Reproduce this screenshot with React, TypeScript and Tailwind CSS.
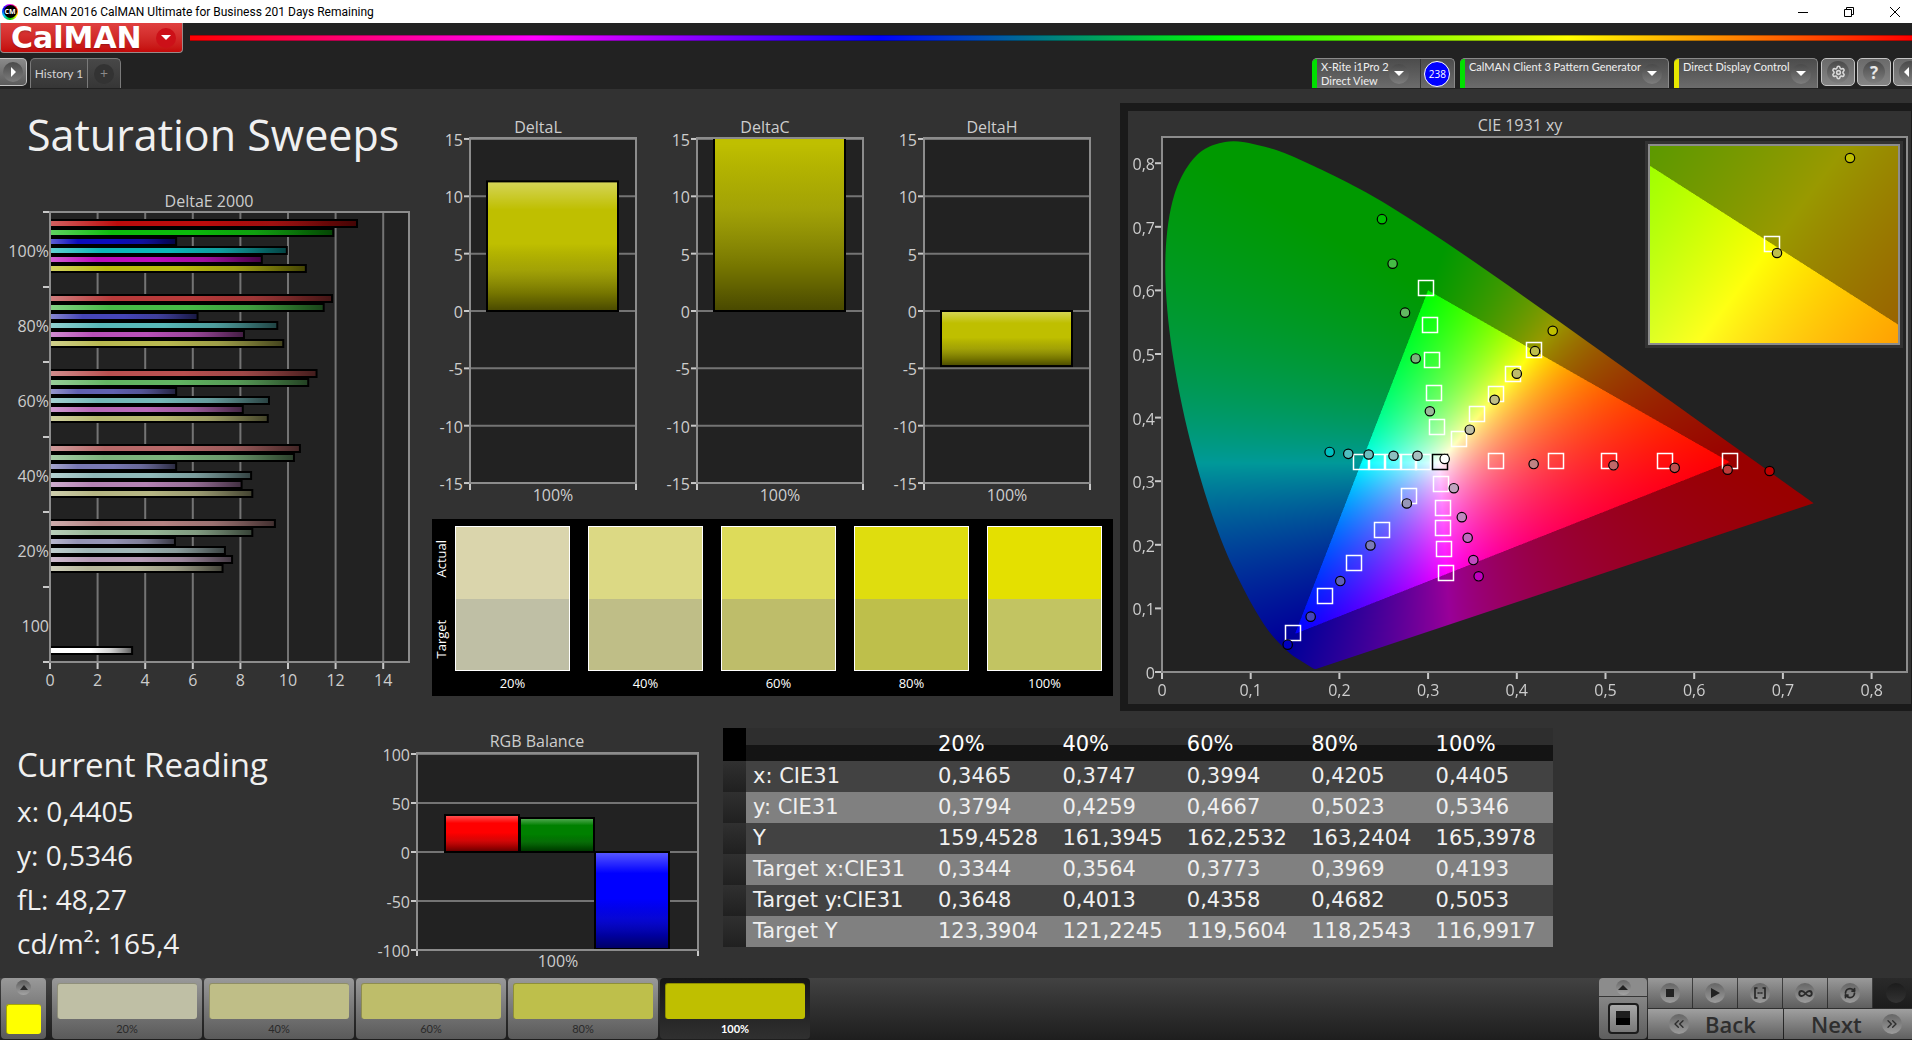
import { useLayoutEffect, useRef } from 'react';
import type { ReactNode } from 'react';
import { Settings, Infinity as InfinityIcon, RefreshCw, ChevronsLeft, ChevronsRight } from 'lucide-react';

type Point = [number, number];

const LEVELS = ['20%', '40%', '60%', '80%', '100%'];

const SWATCHES = [
  { level: '20%', actual: 'bg-[#dad5ac]', target: 'bg-[#bfbfa5]' },
  { level: '40%', actual: 'bg-[#dcd984]', target: 'bg-[#bfbe87]' },
  { level: '60%', actual: 'bg-[#dddb5a]', target: 'bg-[#bebd6a]' },
  { level: '80%', actual: 'bg-[#dfdd0e]', target: 'bg-[#bebf4b]' },
  { level: '100%', actual: 'bg-[#e4e000]', target: 'bg-[#c2c462]' },
];

const TILES = [
  { level: '20%', color: 'bg-[#bfbfa5]' },
  { level: '40%', color: 'bg-[#bfbe87]' },
  { level: '60%', color: 'bg-[#bebd6a]' },
  { level: '80%', color: 'bg-[#bebf4b]' },
  { level: '100%', color: 'bg-[#bfbf00]' },
];

const TABLE_ROWS = [
  { label: 'x: CIE31', values: ['0,3465', '0,3747', '0,3994', '0,4205', '0,4405'] },
  { label: 'y: CIE31', values: ['0,3794', '0,4259', '0,4667', '0,5023', '0,5346'] },
  { label: 'Y', values: ['159,4528', '161,3945', '162,2532', '163,2404', '165,3978'] },
  { label: 'Target x:CIE31', values: ['0,3344', '0,3564', '0,3773', '0,3969', '0,4193'] },
  { label: 'Target y:CIE31', values: ['0,3648', '0,4013', '0,4358', '0,4682', '0,5053'] },
  { label: 'Target Y', values: ['123,3904', '121,2245', '119,5604', '118,2543', '116,9917'] },
];

const DELTA_E = [
  { label: '100%', values: [12.9, 11.9, 5.3, 9.95, 8.9, 10.75], colors: ['#bb0c0c', '#0cbb0c', '#0c0cbb', '#0cb8b8', '#bb0cbb', '#bbbb0c'] },
  { label: '80%', values: [11.85, 11.5, 6.2, 9.55, 8.15, 9.8], colors: ['#b83a3a', '#46ba46', '#4646b8', '#58b8b8', '#b850b8', '#b8b850'] },
  { label: '60%', values: [11.2, 10.85, 5.3, 9.2, 8.1, 9.15], colors: ['#b95050', '#62b562', '#6060b0', '#74b8b8', '#b868b8', '#b8b870'] },
  { label: '40%', values: [10.5, 10.25, 5.3, 8.45, 8.05, 8.5], colors: ['#b76868', '#7bb37b', '#7878b4', '#8fb8b8', '#b482b4', '#b5b583'] },
  { label: '20%', values: [9.45, 8.5, 5.25, 7.35, 7.65, 7.25], colors: ['#b48282', '#96b696', '#9494b4', '#a0b6b6', '#b69bb6', '#b7b79b'] },
];

// CIE 1931 spectral locus, 380nm to 700nm
const LOCUS: Point[] = [
  [0.1741, 0.005], [0.1714, 0.0051], [0.1644, 0.0109], [0.1566, 0.0177], [0.144, 0.0297], [0.1241, 0.0578],
  [0.1096, 0.0868], [0.0913, 0.1327], [0.0687, 0.2007], [0.0454, 0.295], [0.0235, 0.4127], [0.0082, 0.5384],
  [0.0039, 0.6548], [0.0139, 0.7502], [0.0389, 0.812], [0.0743, 0.8338], [0.1142, 0.8262], [0.1547, 0.8059],
  [0.2296, 0.7543], [0.3016, 0.6923], [0.3731, 0.6245], [0.4441, 0.5547], [0.5125, 0.4866], [0.5752, 0.4242],
  [0.627, 0.3725], [0.6658, 0.334], [0.6915, 0.3083], [0.719, 0.2809], [0.7347, 0.2653],
];

const TARGETS: Point[] = [
  [0.298, 0.603], [0.3025, 0.545], [0.304, 0.491], [0.307, 0.439], [0.31, 0.386],
  [0.419, 0.507], [0.396, 0.469], [0.3765, 0.437], [0.3555, 0.405], [0.3345, 0.367],
  [0.224, 0.33], [0.242, 0.33], [0.26, 0.33], [0.278, 0.33], [0.294, 0.33],
  [0.315, 0.295], [0.3164, 0.2576], [0.3164, 0.227], [0.3183, 0.193], [0.32, 0.155],
  [0.279, 0.276], [0.248, 0.223], [0.216, 0.171], [0.184, 0.12], [0.148, 0.062],
  [0.3765, 0.332], [0.444, 0.332], [0.5036, 0.332], [0.567, 0.332], [0.64, 0.332],
];

const READINGS: { points: Point[]; colors: string[] }[] = [
  {
    points: [[0.248, 0.712], [0.26, 0.642], [0.274, 0.565], [0.286, 0.493], [0.302, 0.41]],
    colors: ['#00bf00', '#45bc45', '#62b862', '#7bb57b', '#99b799'],
  },
  {
    points: [[0.4405, 0.5365], [0.4205, 0.5045], [0.4, 0.469], [0.375, 0.428], [0.347, 0.381]],
    colors: ['#bfbf00', '#bebf4b', '#bebd6a', '#bfbe87', '#bfbfa5'],
  },
  {
    points: [[0.189, 0.346], [0.21, 0.343], [0.233, 0.342], [0.261, 0.34], [0.288, 0.34]],
    colors: ['#00bfbf', '#4fbfbf', '#6cbfbf', '#8cbfbf', '#a6bfbf'],
  },
  {
    points: [[0.357, 0.1505], [0.351, 0.176], [0.3446, 0.211], [0.338, 0.2435], [0.329, 0.289]],
    colors: ['#bf00bf', '#bf4bbf', '#bf68bf', '#bf88bf', '#bfa3bf'],
  },
  {
    points: [[0.1417, 0.043], [0.1676, 0.087], [0.201, 0.143], [0.235, 0.199], [0.276, 0.265]],
    colors: ['#0000bf', '#4545bb', '#6060b8', '#7b7bb8', '#9797b8'],
  },
  {
    points: [[0.685, 0.316], [0.6377, 0.318], [0.578, 0.321], [0.509, 0.325], [0.419, 0.327]],
    colors: ['#bf0000', '#bf3a3a', '#bf5050', '#bf6868', '#bf8383'],
  },
];

interface Range {
  x0: number;
  x1: number;
  y0: number;
  y1: number;
}

const CIE_RANGE: Range = { x0: 0, x1: 0.84, y0: 0, y1: 0.841 };
const ZOOM_RANGE: Range = { x0: 0.3855, x1: 0.454, y0: 0.4713, y1: 0.539 };

// Fills the canvas with the chromaticity colours; outside the Rec.709 triangle they are dimmed
function paintChromaticity(canvas: HTMLCanvasElement, range: Range) {
  const ctx = canvas.getContext('2d');
  if (!ctx) return;
  const { width, height } = canvas;
  const image = ctx.createImageData(width, height);
  for (let row = 0; row < height; row++) {
    const y = range.y1 - ((row + 0.5) / height) * (range.y1 - range.y0);
    for (let col = 0; col < width; col++) {
      const x = range.x0 + ((col + 0.5) / width) * (range.x1 - range.x0);
      const z = 1 - x - y;
      const r = 3.2406 * x - 1.5372 * y - 0.4986 * z;
      const g = -0.9689 * x + 1.8758 * y + 0.0415 * z;
      const b = 0.0557 * x - 0.204 * y + 1.057 * z;
      const gain = (Math.min(r, g, b) < 0 ? 153 : 255) / Math.max(r, g, b);
      const i = (row * width + col) * 4;
      image.data[i] = Math.max(0, r * gain);
      image.data[i + 1] = Math.max(0, g * gain);
      image.data[i + 2] = Math.max(0, b * gain);
      image.data[i + 3] = 255;
    }
  }
  ctx.putImageData(image, 0, 0);

  const pts = LOCUS.map(([x, y]): Point => [
    ((x - range.x0) / (range.x1 - range.x0)) * width,
    ((range.y1 - y) / (range.y1 - range.y0)) * height,
  ]);
  ctx.globalCompositeOperation = 'destination-in';
  ctx.beginPath();
  ctx.moveTo(pts[0][0], pts[0][1]);
  for (let i = 0; i < pts.length - 1; i++) {
    const a = pts[Math.max(0, i - 1)];
    const b = pts[i];
    const c = pts[i + 1];
    const d = pts[Math.min(pts.length - 1, i + 2)];
    ctx.bezierCurveTo(
      b[0] + (c[0] - a[0]) / 6, b[1] + (c[1] - a[1]) / 6,
      c[0] - (d[0] - b[0]) / 6, c[1] - (d[1] - b[1]) / 6,
      c[0], c[1],
    );
  }
  ctx.closePath();
  ctx.fill();
  ctx.globalCompositeOperation = 'source-over';
}

function ChromaticityCanvas({ range, width, height }: { range: Range; width: number; height: number }) {
  const ref = useRef<HTMLCanvasElement>(null);
  useLayoutEffect(() => {
    if (ref.current) paintChromaticity(ref.current, range);
  }, [range]);
  return <canvas ref={ref} width={width * 2} height={height * 2} className="block w-full h-full" />;
}

function ChartDefs() {
  return (
    <svg width="0" height="0" className="absolute" aria-hidden="true">
      <defs>
        <linearGradient id="shade-h" x1="0" y1="0" x2="1" y2="0">
          <stop offset="0" stopColor="#fff" stopOpacity="0.35" />
          <stop offset="0.22" stopColor="#fff" stopOpacity="0" />
          <stop offset="0.5" stopColor="#000" stopOpacity="0" />
          <stop offset="0.72" stopColor="#222" stopOpacity="0.18" />
          <stop offset="0.9" stopColor="#000" stopOpacity="0.45" />
          <stop offset="1" stopColor="#000" stopOpacity="0.64" />
        </linearGradient>
        <linearGradient id="shade-v" x1="0" y1="0" x2="0" y2="1">
          <stop offset="0" stopColor="#fff" stopOpacity="0.35" />
          <stop offset="0.22" stopColor="#fff" stopOpacity="0" />
          <stop offset="0.48" stopColor="#000" stopOpacity="0" />
          <stop offset="0.68" stopColor="#222" stopOpacity="0.18" />
          <stop offset="0.86" stopColor="#000" stopOpacity="0.38" />
          <stop offset="1" stopColor="#000" stopOpacity="0.62" />
        </linearGradient>
      </defs>
    </svg>
  );
}

const axisText = 'fill-[#cdcdcd] text-[16px]';

function Bar({ x, y, w, h, color, vertical = true }: { x: number; y: number; w: number; h: number; color: string; vertical?: boolean }) {
  return (
    <>
      <rect x={x} y={y} width={w} height={h} fill={color} />
      <rect x={x} y={y} width={w} height={h} fill={vertical ? 'url(#shade-v)' : 'url(#shade-h)'} stroke="#000" strokeWidth="2" />
    </>
  );
}

function DeltaEChart() {
  const left = 50;
  const top = 51;
  const unit = 23.8;
  return (
    <svg viewBox="0 0 430 549" className="w-full h-auto block" role="img" aria-label="DeltaE 2000">
      <text x="209" y="46" textAnchor="middle" className={axisText}>DeltaE 2000</text>
      <rect x={left} y={top} width="359" height="450" fill="#222" />
      {[2, 4, 6, 8, 10, 12, 14].map((v) => (
        <line key={v} x1={left + v * unit} x2={left + v * unit} y1={top} y2={top + 450} stroke="#747474" strokeWidth="2" />
      ))}
      {DELTA_E.map((group, g) => (
        <g key={group.label}>
          {group.values.map((v, i) => (
            <Bar key={i} x={left} y={top + 8 + g * 75 + i * 9} w={v * unit} h={7} color={group.colors[i]} vertical={false} />
          ))}
          <text x="49" y={top + 45 + g * 75} textAnchor="end" className={axisText}>{group.label}</text>
        </g>
      ))}
      <Bar x={left} y={486} w={3.45 * unit} h={7} color="#ffffff" vertical={false} />
      <text x="49" y={top + 420} textAnchor="end" className={axisText}>100</text>
      <rect x={left} y={top} width="359" height="450" fill="none" stroke="#8c8c8c" strokeWidth="2" />
      {[0, 1, 2, 3, 4, 5, 6].map((i) => (
        <line key={i} x1="43" x2="49" y1={top + i * 75} y2={top + i * 75} stroke="#c8c8c8" strokeWidth="2" />
      ))}
      {[0, 2, 4, 6, 8, 10, 12, 14].map((v) => (
        <g key={v}>
          <line x1={left + v * unit} x2={left + v * unit} y1="502" y2="508" stroke="#c8c8c8" strokeWidth="2" />
          <text x={left + v * unit} y="525" textAnchor="middle" className={axisText}>{v}</text>
        </g>
      ))}
    </svg>
  );
}

function DeltaChart({ title, value }: { title: string; value: number }) {
  const zero = 202;
  const unit = 11.47;
  const end = value * unit;
  return (
    <svg viewBox="0 0 227 400" className="w-full h-auto block" role="img" aria-label={title}>
      <clipPath id={`${title}-plot`}>
        <rect x="40" y="29" width="166" height="345" />
      </clipPath>
      <text x="108" y="24" textAnchor="middle" className={axisText}>{title}</text>
      <rect x="40" y="29" width="166" height="345" fill="#222" />
      {[15, 10, 5, 0, -5, -10, -15].map((v) => (
        <g key={v}>
          <line x1="40" x2="206" y1={zero - v * unit} y2={zero - v * unit} stroke="#747474" strokeWidth="2" />
          <line x1="34" x2="40" y1={zero - v * unit} y2={zero - v * unit} stroke="#c8c8c8" strokeWidth="2" />
          <text x="33" y={zero - v * unit + 7} textAnchor="end" className={axisText}>{v}</text>
        </g>
      ))}
      <g clipPath={`url(#${title}-plot)`}>
        <Bar x={57} y={end > 0 ? zero - end : zero} w={131} h={Math.abs(end)} color="#bfbf00" />
      </g>
      <rect x="40" y="29" width="166" height="345" fill="none" stroke="#8c8c8c" strokeWidth="2" />
      <line x1="40" x2="40" y1="375" y2="381" stroke="#c8c8c8" strokeWidth="2" />
      <line x1="206" x2="206" y1="375" y2="381" stroke="#c8c8c8" strokeWidth="2" />
      <text x="123" y="392" textAnchor="middle" className={axisText}>100%</text>
    </svg>
  );
}

function RgbBalanceChart() {
  const zero = 131;
  const unit = 0.98;
  return (
    <svg viewBox="0 0 340 256" className="w-full h-auto block" role="img" aria-label="RGB Balance">
      <text x="167" y="26" textAnchor="middle" className={axisText}>RGB Balance</text>
      <rect x="47" y="32" width="281" height="197" fill="#222" />
      {[100, 50, 0, -50, -100].map((v) => (
        <g key={v}>
          <line x1="47" x2="328" y1={zero - v * unit} y2={zero - v * unit} stroke="#747474" strokeWidth="2" />
          <line x1="41" x2="47" y1={zero - v * unit} y2={zero - v * unit} stroke="#c8c8c8" strokeWidth="2" />
          <text x="40" y={zero - v * unit + 7} textAnchor="end" className={axisText}>{v}</text>
        </g>
      ))}
      <Bar x={75} y={zero - 37} w={74} h={37} color="#ff0000" />
      <Bar x={150} y={zero - 34} w={74} h={34} color="#008000" />
      <Bar x={225} y={zero} w={74} h={97} color="#0000ff" />
      <rect x="47" y="32" width="281" height="197" fill="none" stroke="#8c8c8c" strokeWidth="2" />
      <line x1="47" x2="47" y1="230" y2="235" stroke="#c8c8c8" strokeWidth="2" />
      <line x1="328" x2="328" y1="230" y2="235" stroke="#c8c8c8" strokeWidth="2" />
      <text x="188" y="246" textAnchor="middle" className={axisText}>100%</text>
    </svg>
  );
}

function Target({ x, y, stroke = '#fff' }: { x: number; y: number; stroke?: string }) {
  return <rect x={Math.round(x) - 7.5} y={Math.round(y) - 7.5} width="15" height="15" fill="none" stroke={stroke} strokeWidth="1.5" />;
}

function Reading({ x, y, color }: { x: number; y: number; color: string }) {
  return <circle cx={x} cy={y} r="4.7" fill={color} stroke="#000" strokeWidth="1.2" />;
}

function CieChart() {
  const left = 34;
  const top = 26;
  const width = 745;
  const height = 535;
  const px = (x: number) => left + x * 887;
  const py = (y: number) => top + height - y * 636;
  const label = (v: number) => (v === 0 ? '0' : `0,${v}`);
  return (
    <svg viewBox="0 0 783 593" className="w-full h-auto block bg-[#323232]" role="img" aria-label="CIE 1931 xy">
      <text x="392" y="20" textAnchor="middle" className={axisText}>CIE 1931 xy</text>
      <rect x={left} y={top} width={width} height={height} fill="#222" />
      <foreignObject x={left} y={top} width={width} height={height}>
        <ChromaticityCanvas range={CIE_RANGE} width={width} height={height} />
      </foreignObject>
      <rect x={left} y={top} width={width} height={height} fill="none" stroke="#8c8c8c" strokeWidth="2" />
      {[0, 1, 2, 3, 4, 5, 6, 7, 8].map((v) => (
        <g key={v}>
          <line x1={px(v / 10)} x2={px(v / 10)} y1="562" y2="568" stroke="#c8c8c8" strokeWidth="2" />
          <text x={px(v / 10)} y="585" textAnchor="middle" className={axisText}>{label(v)}</text>
          <line x1="27" x2="33" y1={py(v / 10)} y2={py(v / 10)} stroke="#c8c8c8" strokeWidth="2" />
          <text x="27" y={py(v / 10) + 7} textAnchor="end" className={axisText}>{label(v)}</text>
        </g>
      ))}
      {TARGETS.map(([x, y]) => (
        <Target key={`${x}-${y}`} x={px(x)} y={py(y)} />
      ))}
      <Target x={px(0.313)} y={py(0.33)} stroke="#000" />
      <Reading x={px(0.3187)} y={py(0.335)} color="#fff" />
      {READINGS.map((series) =>
        series.points.map(([x, y], i) => <Reading key={`${x}-${y}`} x={px(x)} y={py(y)} color={series.colors[i]} />),
      )}
      {/* Magnified view around the current target */}
      <rect x="517" y="30" width="258" height="207" fill="#323232" />
      <foreignObject x="521" y="34" width="250" height="199">
        <ChromaticityCanvas range={ZOOM_RANGE} width={250} height={199} />
      </foreignObject>
      <rect x="521" y="34" width="250" height="199" fill="none" stroke="#8c8c8c" strokeWidth="2" />
      <Target x={644} y={133} />
      <Reading x={649} y={142} color="#bebf4b" />
      <Reading x={722} y={47} color="#bfbf00" />
    </svg>
  );
}

function Dimple({ children, size = 'w-5 h-5' }: { children?: ReactNode; size?: string }) {
  return (
    <span className={`${size} shrink-0 rounded-full bg-linear-to-b from-[#4a4a4a] to-[#7d7d7d] text-white flex items-center justify-center`}>
      {children}
    </span>
  );
}

function DownArrow() {
  return (
    <svg viewBox="0 0 10 5" className="w-2.5 h-[5px]" fill="currentColor">
      <path d="M0 0h10L5 5z" />
    </svg>
  );
}

function TitleBar() {
  return (
    <header className="h-[23px] bg-white text-black flex items-center justify-between pl-0.5">
      <div className="flex items-center gap-[5px]">
        <span className="w-4 h-4 rounded-full bg-[conic-gradient(#f0f,#f00,#ff0,#0c0,#0cf,#00f,#f0f)] flex items-center justify-center">
          <span className="w-[13px] h-[13px] rounded-full bg-black text-white text-[7px] font-bold leading-none flex items-center justify-center">CM</span>
        </span>
        <h1 className="font-['Roboto',sans-serif] text-[12px]">CalMAN 2016 CalMAN Ultimate for Business 201 Days Remaining</h1>
      </div>
      <div className="flex -mr-1.5">
        <button aria-label="Minimize" className="w-[46px] flex justify-center items-center">
          <svg viewBox="0 0 10 10" className="w-2.5 h-2.5" stroke="#000"><path d="M0 5.5h10" /></svg>
        </button>
        <button aria-label="Restore" className="w-[46px] flex justify-center items-center">
          <svg viewBox="0 0 10 10" className="w-2.5 h-2.5" stroke="#000" fill="none"><path d="M.5 2.5h7v7h-7zM2.5 2.5v-2h7v7h-2" /></svg>
        </button>
        <button aria-label="Close" className="w-[46px] flex justify-center items-center">
          <svg viewBox="0 0 10 10" className="w-2.5 h-2.5" stroke="#000"><path d="M0 0l10 10M10 0L0 10" /></svg>
        </button>
      </div>
    </header>
  );
}

interface DeviceTabProps {
  lines: string[];
  led: string;
  width: string;
  children?: ReactNode;
}

function DeviceTab({ lines, led, width, children }: DeviceTabProps) {
  return (
    <div className={`${width} h-[30px] flex rounded-t-[5px] overflow-hidden border-t border-r border-[#8a8a8a] bg-linear-to-b from-[#4c4c4c] to-[#6c6c6c]`}>
      <span className={`w-[5px] shrink-0 ${led}`} />
      <button className={`flex-1 flex items-center justify-between pl-1 text-left ${children ? 'pr-[11px]' : 'pr-1.5'}`}>
        <span className="self-start pt-px font-['Lato',sans-serif] text-[11px] leading-[14px] whitespace-nowrap text-[#f0f0f0]">
          {lines.map((line) => (
            <span key={line} className="block">{line}</span>
          ))}
        </span>
        <Dimple><DownArrow /></Dimple>
      </button>
      {children}
    </div>
  );
}

function Toolbar() {
  const square = 'w-[34px] h-7 shrink-0 rounded-[5px] border border-[#c4c4c4] bg-linear-to-b from-[#6a6a6a] to-[#858585] flex items-center justify-center';
  return (
    <div className="flex items-start justify-between h-8 pt-px">
      <div className="flex gap-[3px]">
        <button aria-label="Expand" className="w-[27px] h-7 rounded-r-[5px] border border-l-0 border-[#c4c4c4] bg-linear-to-b from-[#8a8a8a] to-[#5c5c5c] flex items-center justify-center">
          <Dimple>
            <svg viewBox="0 0 5 10" className="w-[5px] h-2.5" fill="currentColor"><path d="M0 0l5 5-5 5z" /></svg>
          </Dimple>
        </button>
        <div className="flex h-[30px] rounded-t-[5px] border border-b-0 border-[#7a7a7a] bg-linear-to-b from-[#484848] to-[#363636] text-[#d4d4d4]">
          <button className="w-[57px] border-r border-[#7a7a7a] font-['Lato',sans-serif] text-[12px]">History 1</button>
          <button aria-label="Add history" className="w-8 flex items-center justify-center">
            <span className="w-5 h-5 rounded-full bg-[#333] text-[#8a8a8a] text-[14px] leading-5">+</span>
          </button>
        </div>
      </div>
      <div className="flex gap-[5px]">
        <DeviceTab lines={['X-Rite i1Pro 2', 'Direct View']} led="bg-[#00e000]" width="w-[143px]">
          <div className="w-[35px] border-l border-[#333] flex items-center justify-center">
            <span className="w-[26px] h-[26px] rounded-full bg-[#0000ff] border border-white text-white text-[10px] leading-none flex items-center justify-center">238</span>
          </div>
        </DeviceTab>
        <DeviceTab lines={['CalMAN Client 3 Pattern Generator']} led="bg-[#00e000]" width="w-[209px]" />
        <DeviceTab lines={['Direct Display Control']} led="bg-[#e8e800]" width="w-[144px]" />
        <div className="flex gap-0.5 -ml-0.5 -mr-[15px]">
          <button aria-label="Settings" className={square}>
            <Dimple size="w-[22px] h-[22px]"><Settings className="w-[15px] h-[15px] text-[#d8d8d8]" strokeWidth={2.5} /></Dimple>
          </button>
          <button aria-label="Help" className={square}>
            <Dimple size="w-[22px] h-[22px]"><span className="text-[17px] font-bold leading-none text-[#e8e8e8]">?</span></Dimple>
          </button>
          <button aria-label="Collapse" className={square}>
            <Dimple size="w-[22px] h-[22px]">
              <svg viewBox="0 0 5 10" className="w-[5px] h-2.5 mr-2" fill="currentColor"><path d="M5 0L0 5l5 5z" /></svg>
            </Dimple>
          </button>
        </div>
      </div>
    </div>
  );
}

function ColorComparison() {
  return (
    <div className="mt-2.5 mr-[7px] ml-0.5 h-[177px] bg-black text-white flex pt-[7px] pr-[11px]">
      <div className="w-[23px] h-[145px] pl-px flex flex-col items-start text-[13px] leading-4">
        <span className="flex-1 [writing-mode:vertical-rl] rotate-180 text-center pt-2">Actual</span>
        <span className="flex-1 [writing-mode:vertical-rl] rotate-180 text-center pb-2">Target</span>
      </div>
      <div className="flex-1 grid grid-cols-5 gap-[18px]">
        {SWATCHES.map((s) => (
          <div key={s.level}>
            <div className="h-[145px] flex flex-col border border-white">
              <div className={`flex-1 ${s.actual}`} />
              <div className={`flex-1 ${s.target}`} />
            </div>
            <p className="text-center text-[13px] leading-6">{s.level}</p>
          </div>
        ))}
      </div>
    </div>
  );
}

function ReadingTable() {
  return (
    <table className="w-full table-fixed border-collapse text-left text-[#f0f0f0] text-[21px] leading-[31px] font-['DejaVu_Sans',sans-serif]">
      <colgroup>
        <col className="w-[23px]" />
        <col className="w-[185px]" />
        <col /><col /><col /><col /><col />
      </colgroup>
      <thead>
        <tr className="h-[33px] bg-linear-to-b from-[#2e2e2e] from-50% to-[#141414] to-50% text-white">
          <td className="bg-black" />
          <td />
          {LEVELS.map((level) => (
            <th key={level} scope="col" className="font-normal pl-[7px]">{level}</th>
          ))}
        </tr>
      </thead>
      <tbody>
        {TABLE_ROWS.map((row) => (
          <tr key={row.label} className="h-[31px] bg-[#424242] even:bg-[#808080]">
            <td className="bg-linear-to-b from-[#303030] to-[#202020]" />
            <th scope="row" className="font-normal pl-[7px] whitespace-nowrap">{row.label}</th>
            {row.values.map((v, i) => (
              <td key={i} className="pl-[7px]">{v}</td>
            ))}
          </tr>
        ))}
      </tbody>
    </table>
  );
}

function TransportButton({ label, children }: { label: string; children: ReactNode }) {
  return (
    <button aria-label={label} className="w-11 h-[30px] bg-linear-to-b from-[#9a9a9a] to-[#5e5e5e] flex items-center justify-center">
      <span className="w-5 h-5 rounded-full bg-linear-to-b from-[#666] to-[#9c9c9c] text-[#2a2a2a] flex items-center justify-center">{children}</span>
    </button>
  );
}

function BottomBar() {
  const nav = 'h-[30px] flex items-center bg-linear-to-b from-[#a0a0a0] to-[#606060] text-[#2e2e2e] text-[22px] font-semibold';
  const dot = 'w-5 h-5 rounded-full bg-linear-to-b from-[#666] to-[#9c9c9c] flex items-center justify-center';
  return (
    <footer className="h-[62px] flex justify-between bg-linear-to-b from-[#424242] to-[#1e1e1e]">
      <div className="flex gap-0.5 pl-px">
        <button aria-label="Pattern color" className="w-[45px] h-[61px] mr-1 rounded-[4px] bg-linear-to-b from-[#999] to-[#5a5a5a] flex flex-col items-center pt-0.5">
          <span className="w-[15px] h-[15px] rounded-full bg-linear-to-b from-[#5c5c5c] to-[#a4a4a4] text-[#2a2a2a] flex items-center justify-center">
            <svg viewBox="0 0 8 5" className="w-2 h-[5px]" fill="currentColor"><path d="M0 5h8L4 0z" /></svg>
          </span>
          <span className="mt-[9px] w-[35px] h-[30px] rounded-[3px] bg-[#ffff00] border-t border-l border-[#a8a800]" />
        </button>
        {TILES.map((tile) => {
          const isActive = tile.level === '100%';
          return (
            <button
              key={tile.level}
              className={`w-[150px] h-[61px] px-[5px] pt-[5px] rounded-[4px] flex flex-col text-[11px] font-['Lato',sans-serif] ${
                isActive
                  ? 'bg-linear-to-b from-[#161616] to-[#303030] text-white font-bold'
                  : 'bg-linear-to-b from-[#999] to-[#5a5a5a] text-[#2a2a2a]'
              }`}
            >
              <span className={`w-full h-9 rounded-[3px] border-t border-l border-black/25 ${tile.color}`} />
              <span className="w-full text-center leading-5">{tile.level}</span>
            </button>
          );
        })}
      </div>
      <div className="flex gap-px -mr-[7px]">
        <div className="w-12 flex flex-col gap-px">
          <button aria-label="More" className="h-[18px] rounded-t-[4px] bg-[#8c8c8c] flex items-center justify-center">
            <span className="w-[15px] h-[15px] rounded-full bg-linear-to-b from-[#666] to-[#a4a4a4] flex items-center justify-center">
              <svg viewBox="0 0 10 5" className="w-2.5 h-[5px]" fill="#222"><path d="M0 5h10L5 0z" /></svg>
            </span>
          </button>
          <button aria-label="Pattern window" className="h-[42px] rounded-b-[4px] bg-linear-to-b from-[#868686] to-[#5e5e5e] flex items-center justify-center">
            <span className="w-[31px] h-[31px] rounded-[4px] border-2 border-[#1c1c1c] bg-linear-to-b from-[#a8a8a8] to-[#787878] flex items-center justify-center">
              <span className="w-3.5 h-3.5 bg-linear-to-b from-[#1e1e1e] from-50% to-black to-50%" />
            </span>
          </button>
        </div>
        <div className="flex flex-col gap-px">
          <div className="flex gap-px">
            <TransportButton label="Stop"><span className="w-2 h-2 bg-[#222]" /></TransportButton>
            <TransportButton label="Play">
              <svg viewBox="0 0 9 10" className="w-[9px] h-2.5" fill="#222"><path d="M0 0l9 5-9 5z" /></svg>
            </TransportButton>
            <TransportButton label="Range">
              <svg viewBox="0 0 12 12" className="w-3 h-3" fill="none" stroke="#222" strokeWidth="1.6"><path d="M3.5 1H1v10h2.500M8.500 1H11v10H8.500M3.500 6h1.400M5.300 6h1.400M7.100 6h1.400" /></svg>
            </TransportButton>
            <TransportButton label="Loop"><InfinityIcon className="w-[15px] h-[15px]" strokeWidth={3} /></TransportButton>
            <TransportButton label="Refresh"><RefreshCw className="w-3 h-3" strokeWidth={3.5} /></TransportButton>
            <button aria-label="Record" className="w-[46px] h-[30px] flex items-center justify-center bg-linear-to-b from-[#2a2a2a] to-[#1c1c1c]">
              <span className="w-5 h-5 rounded-full bg-linear-to-b from-[#1c1c1c] to-[#333]" />
            </button>
          </div>
          <div className="flex gap-px">
            <button className={`${nav} w-[135px] pl-[21px] gap-4`}>
              <span className={dot}><ChevronsLeft className="w-4 h-4" /></span>Back
            </button>
            <button className={`${nav} flex-1 pl-[27px] gap-5`}>
              Next<span className={dot}><ChevronsRight className="w-4 h-4" /></span>
            </button>
          </div>
        </div>
      </div>
    </footer>
  );
}

export default function App() {
  return (
    <div className="min-h-screen flex flex-col overflow-hidden bg-[#323232] text-[#f0f0f0] font-['Open_Sans',sans-serif]">
      <ChartDefs />
      <TitleBar />
      <div className="bg-[#222]">
        <div className="flex gap-[7px] h-[34px]">
          <button aria-label="CalMAN menu" className="w-[183px] h-[30px] rounded-b-[4px] border-b border-r border-l border-[#9a8a8a] bg-linear-to-b from-[#e04040] to-[#c40808] flex items-center justify-between pl-2.5 pr-1.5">
            <span className="font-['DejaVu_Sans',sans-serif] font-bold text-[30px] leading-7 text-white text-shadow-sm">CalMAN</span>
            <span className="w-5 h-5 rounded-full bg-[#cc1018] text-white flex items-center justify-center"><DownArrow /></span>
          </button>
          <div className="flex-1 mt-3 h-1.5 border-y border-black/30 bg-[linear-gradient(to_right,#f00,#f0f,#00f,#0f0,#ff0,#f00)]" />
        </div>
        <Toolbar />
      </div>

      <main className="flex-1 flex flex-col">
        <div className="grid grid-cols-[430fr_690fr_792fr] items-start">
          <section>
            <h2 className="pt-5 pl-[27px] text-[43px] leading-[52px] whitespace-nowrap">Saturation Sweeps</h2>
            <DeltaEChart />
          </section>
          <section className="pt-5">
            <div className="grid grid-cols-3 mr-[9px]">
              <DeltaChart title="DeltaL" value={11.3} />
              <DeltaChart title="DeltaC" value={28} />
              <DeltaChart title="DeltaH" value={-4.8} />
            </div>
            <ColorComparison />
          </section>
          <section className="mt-3.5 bg-[#1a1a1a] pt-2 pl-2 pr-px pb-[7px]">
            <CieChart />
          </section>
        </div>

        <div className="grid grid-cols-[370fr_340fr_843fr_359fr] items-start pt-2.5">
          <section className="pl-[17px] pt-5">
            <h2 className="text-[33px] leading-[48px]">Current Reading</h2>
            <div className="text-[28px] leading-[44px]">
              <p>x: 0,4405</p>
              <p>y: 0,5346</p>
              <p>fL: 48,27</p>
              <p>cd/m²: 165,4</p>
            </div>
          </section>
          <RgbBalanceChart />
          <section className="pl-[13px] pt-[7px]">
            <ReadingTable />
          </section>
        </div>
      </main>
      <BottomBar />
    </div>
  );
}
